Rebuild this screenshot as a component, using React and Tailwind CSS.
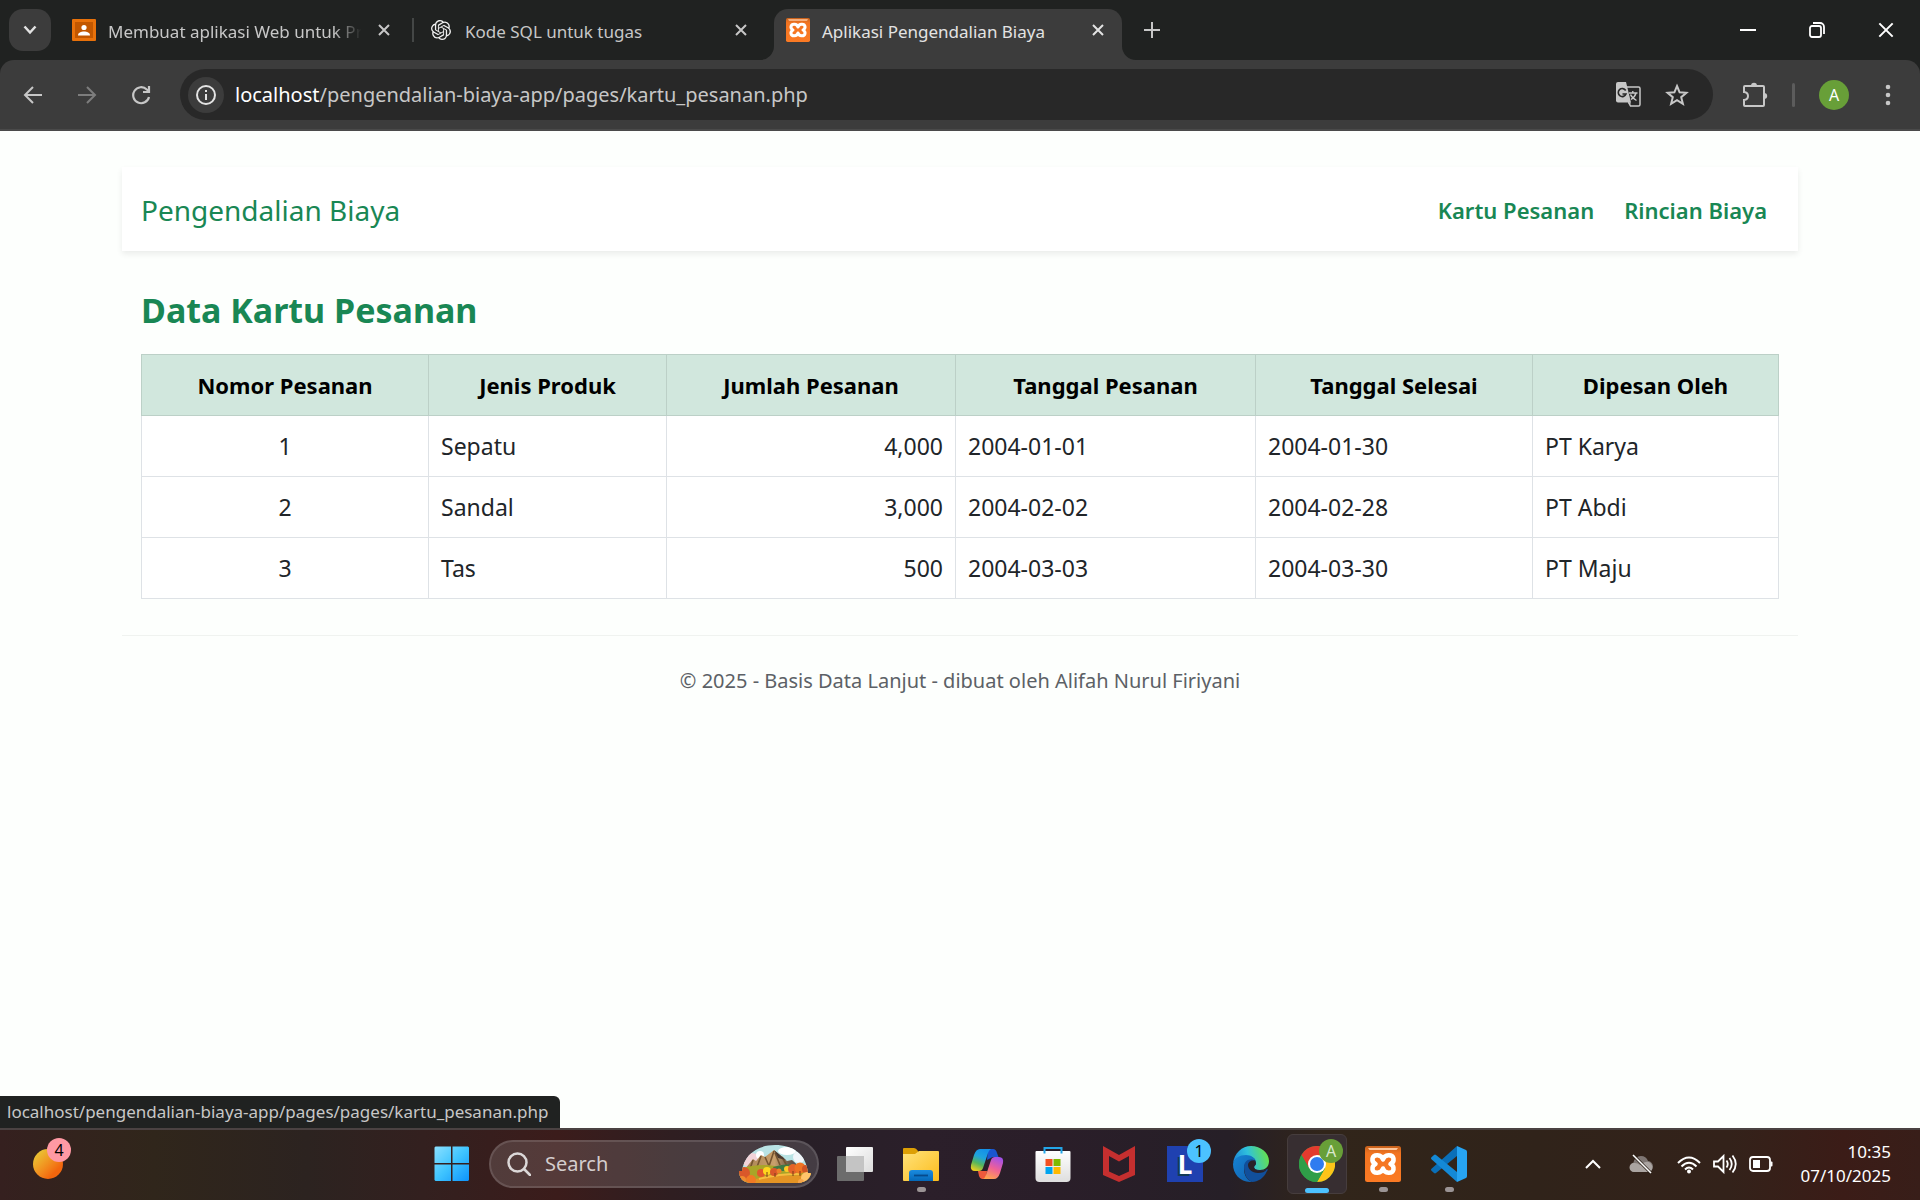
import React, { useId } from "react";
import { SiOpenai } from "react-icons/si";

const rows = [
  ["1", "Sepatu", "4,000", "2004-01-01", "2004-01-30", "PT Karya"],
  ["2", "Sandal", "3,000", "2004-02-02", "2004-02-28", "PT Abdi"],
  ["3", "Tas", "500", "2004-03-03", "2004-03-30", "PT Maju"],
];
const headers = ["Nomor Pesanan", "Jenis Produk", "Jumlah Pesanan", "Tanggal Pesanan", "Tanggal Selesai", "Dipesan Oleh"];
const cellAlign = ["text-center", "text-left", "text-right", "text-left", "text-left", "text-left"];

function Cross({ className = "size-3", w = 2 }) {
  return (
    <svg viewBox="0 0 12 12" className={className} fill="none" stroke="currentColor" strokeWidth={w}>
      <path d="M1 1l10 10M11 1L1 11" />
    </svg>
  );
}

function Xampp({ className }) {
  const id = useId();
  return (
    <svg viewBox="0 0 36 36" className={className}>
      <defs>
        <linearGradient id={id} x1="0" y1="0" x2="0" y2="1">
          <stop offset="0" stopColor="#c4601c" />
          <stop offset=".2" stopColor="#f27421" />
          <stop offset="1" stopColor="#fb7a24" />
        </linearGradient>
      </defs>
      <rect width="36" height="36" rx="2.500" fill={`url(#${id})`} />
      <path d="M3 2h30l-1.500 2h-27z" fill="#ffc79c" />
      <path
        d="M18 13.500C16.500 8 8.500 8 7.500 12.500 7 15.500 8.500 17 10.500 18 8.500 19 7 20.500 7.500 23.500 8.500 28 16.500 28 18 22.500 19.500 28 27.500 28 28.500 23.500 29 20.500 27.500 19 25.500 18 27.500 17 29 15.500 28.500 12.500 27.500 8 19.500 8 18 13.500z"
        fill="none"
        stroke="#fff"
        strokeWidth="4.500"
        strokeLinejoin="round"
      />
    </svg>
  );
}

function Classroom() {
  return (
    <svg viewBox="0 0 24 24" className="size-6 shrink-0">
      <rect y="1" width="24" height="22" rx="1" fill="#e8710a" />
      <rect x="3" y="4" width="18" height="16" fill="#c25700" />
      <circle cx="12" cy="9.500" r="2.600" fill="#fff" />
      <path d="M6 17.500c0-3 3-4 6-4s6 1 6 4z" fill="#fff" />
    </svg>
  );
}

function TabStrip() {
  return (
    <header className="flex h-[60px] items-center bg-[#202221] text-[#c7c7c7]">
      <button aria-label="Search tabs" className="ml-[9px] flex size-[42px] shrink-0 items-center justify-center rounded-[14px] bg-[#3c3c3c] text-[#e3e3e3]">
        <svg viewBox="0 0 14 10" className="h-[10px] w-[14px]" fill="none" stroke="currentColor" strokeWidth="2.500">
          <path d="M1.500 1.500L7 7.500l5.500-6" />
        </svg>
      </button>
      <div className="flex w-[723px] shrink-0 items-center">
        <div className="flex w-[361px] items-center pl-[21px]">
          <Classroom />
          <span className="ml-3 w-[256px] pt-[3px] text-[17px] whitespace-nowrap [mask-image:linear-gradient(to_right,#000_88%,transparent_99%)]">
            Membuat aplikasi Web untuk Pr
          </span>
          <button aria-label="Close tab" className="ml-[14px]"><Cross /></button>
        </div>
        <div className="h-6 w-[2px] bg-[#444746]" />
        <div className="flex flex-1 items-center pl-[17px]">
          <SiOpenai className="size-5 shrink-0 text-[#f1f1f1]" />
          <span className="ml-[14px] flex-1 pt-[3px] text-[17px]">Kode SQL untuk tugas</span>
          <button aria-label="Close tab" className="mr-[27px]"><Cross /></button>
        </div>
      </div>
      <div className="relative flex h-[51px] w-[348px] shrink-0 items-center self-end rounded-t-[14px] bg-[#3c3c3c] pb-[9px] pl-3 text-[#e3e3e3]">
        <svg viewBox="0 0 14 14" className="absolute bottom-0 -left-[14px] size-[14px] fill-[#3c3c3c]"><path d="M14 0v14H0A14 14 0 0014 0z" /></svg>
        <svg viewBox="0 0 14 14" className="absolute -right-[14px] bottom-0 size-[14px] fill-[#3c3c3c]"><path d="M0 0v14h14A14 14 0 010 0z" /></svg>
        <Xampp className="size-6 shrink-0" />
        <span className="ml-3 flex-1 pt-[3px] text-[17px]">Aplikasi Pengendalian Biaya</span>
        <button aria-label="Close tab" className="mr-[18px]"><Cross /></button>
      </div>
      <button aria-label="New tab" className="ml-[22px]">
        <svg viewBox="0 0 16 16" className="size-4" stroke="currentColor" strokeWidth="2"><path d="M8 0v16M0 8h16" /></svg>
      </button>
      <div className="ml-auto flex text-white">
        <button aria-label="Minimize" className="flex h-[60px] w-[69px] items-center justify-center">
          <svg viewBox="0 0 16 16" className="size-4" stroke="currentColor" strokeWidth="2"><path d="M0 8h16" /></svg>
        </button>
        <button aria-label="Restore" className="flex h-[60px] w-[69px] items-center justify-center">
          <svg viewBox="0 0 16 16" className="size-4" fill="none" stroke="currentColor" strokeWidth="1.800">
            <rect x="1" y="4" width="11" height="11" rx="2" />
            <path d="M4 1h7a4 4 0 014 4v7" />
          </svg>
        </button>
        <button aria-label="Close" className="flex h-[60px] w-[69px] items-center justify-center"><Cross className="size-4" w={1.5} /></button>
      </div>
    </header>
  );
}

function Toolbar() {
  return (
    <div className="bg-[#202221]">
      <div className="flex h-[71px] items-center rounded-t-[14px] border-b-2 border-[#4a4a4a] bg-[#3c3c3c] text-[#c7c7c7]">
        <button aria-label="Back" className="ml-[23px]">
          <svg viewBox="0 0 20 20" className="size-5" fill="none" stroke="currentColor" strokeWidth="2"><path d="M19 10H2M10 2l-8 8 8 8" /></svg>
        </button>
        <button aria-label="Forward" className="ml-[34px] text-[#7d7d7d]">
          <svg viewBox="0 0 20 20" className="size-5" fill="none" stroke="currentColor" strokeWidth="2"><path d="M1 10h17M10 2l8 8-8 8" /></svg>
        </button>
        <button aria-label="Reload" className="ml-[34px]">
          <svg viewBox="0 0 20 20" className="size-5" fill="none" stroke="currentColor" strokeWidth="2.200"><path d="M18 12a8 8 0 11-2.200-7.500L18 6.500M18 1v6h-6" /></svg>
        </button>
        <div className="ml-[29px] flex h-[51px] flex-1 items-center rounded-full bg-[#282828] pl-2">
          <button aria-label="Site information" className="flex size-9 items-center justify-center rounded-full bg-[#3c3c3c] text-[#e3e3e3]">
            <svg viewBox="0 0 20 20" className="size-5" fill="none" stroke="currentColor" strokeWidth="2"><circle cx="10" cy="10" r="9" /><path d="M10 9v6M10 5v2" /></svg>
          </button>
          <a href="#address" className="ml-[11px] flex-1 text-[20px]">
            <span className="text-white">localhost</span>/pengendalian-biaya-app/pages/kartu_pesanan.php
          </a>
          <button aria-label="Translate this page">
            <svg viewBox="0 0 25 25" className="size-[25px]">
              <path d="M11 5h11.500q1.500 0 1.500 1.500v16q0 1.500-1.500 1.500H14.500l-2-4" fill="none" stroke="currentColor" strokeWidth="1.500" />
              <path d="M2 0h8l5 20.500H2q-2 0-2-2V2q0-2 2-2z" fill="currentColor" />
              <path d="M9.700 8.500A4 4 0 1010 12H6.500" fill="none" stroke="#282828" strokeWidth="1.600" />
              <path d="M13 11h8.500M16.800 9v2M20 11c-.7 3-2.700 5-5 6.500M14.500 12.500c1 2.500 3.500 4.500 6 6" fill="none" stroke="currentColor" strokeWidth="1.400" />
              <path d="M12 20.500h3l-1.500 3z" fill="currentColor" />
            </svg>
          </button>
          <button aria-label="Bookmark this tab" className="mr-6 ml-6">
            <svg viewBox="0 0 24 24" className="size-6" fill="none" stroke="currentColor" strokeWidth="2">
              <path d="M12 3l2.600 6.300 6.800.5-5.200 4.400 1.700 6.600L12 17.200l-5.900 3.600 1.700-6.600-5.200-4.400 6.800-.5z" />
            </svg>
          </button>
        </div>
        <button aria-label="Extensions" className="ml-[29px]">
          <svg viewBox="0 0 26 26" className="size-[26px]" fill="none" stroke="currentColor" strokeWidth="2">
            <path d="M3 4h18q1 0 1 1v18q0 1-1 1H3q-1 0-1-1v-5q4-.5 4-4t-4-4V5q0-1 1-1z" />
            <path d="M9 4a3 3.200 0 016 0zM22 11a3.200 3 0 010 6z" fill="currentColor" stroke="none" />
          </svg>
        </button>
        <div className="ml-6 h-6 w-[3px] rounded bg-[#5c5c5c]" />
        <button aria-label="Profile" className="ml-6 size-[30px] rounded-full bg-[#689f38] text-[16px] text-white">A</button>
        <button aria-label="Menu" className="mr-[22px] ml-[29px]">
          <svg viewBox="0 0 20 22" className="h-[22px] w-5" fill="currentColor"><circle cx="10" cy="3" r="2.300" /><circle cx="10" cy="11" r="2.300" /><circle cx="10" cy="19" r="2.300" /></svg>
        </button>
      </div>
    </div>
  );
}

function Page() {
  return (
    <div className="relative flex-1 bg-[#fdfffd] px-[122px] pt-[36px]">
      <nav className="flex h-[84px] items-center justify-between bg-white px-[19px] pt-[2px] shadow-[0_3px_6px_rgba(0,0,0,0.075)]">
        <a href="#home" className="text-[28px] text-[#198754]">Pengendalian Biaya</a>
        <div className="mr-3 flex gap-[30px] text-[22px] font-semibold text-[#198754]">
          <a href="#kartu">Kartu Pesanan</a>
          <a href="#rincian">Rincian Biaya</a>
        </div>
      </nav>
      <main className="px-[19px]">
        <h1 className="mt-[38px] text-[34px] leading-[43px] font-bold text-[#198754]">Data Kartu Pesanan</h1>
        <table className="mt-[22px] w-full table-fixed border-collapse bg-white text-[23px] leading-9 text-[#212529]">
          <colgroup>
            <col className="w-[287px]" />
            <col className="w-[238px]" />
            <col className="w-[289px]" />
            <col className="w-[300px]" />
            <col className="w-[277px]" />
            <col className="w-[246px]" />
          </colgroup>
          <thead>
            <tr className="bg-[#d1e7dd] text-[22px] text-black">
              {headers.map((h) => (
                <th key={h} scope="col" className="border border-[#bcd0c7] p-3 font-bold">{h}</th>
              ))}
            </tr>
          </thead>
          <tbody>
            {rows.map((r) => (
              <tr key={r[0]}>
                {r.map((c, i) => (
                  <td key={i} className={`border border-[#dee2e6] p-3 ${cellAlign[i]}`}>{c}</td>
                ))}
              </tr>
            ))}
          </tbody>
        </table>
      </main>
      <footer className="mt-9 border-t border-[#f0f3f0] pt-[30px] text-center text-[20px] leading-[30px] text-[#5c6166]">
        © 2025 - Basis Data Lanjut - dibuat oleh Alifah Nurul Firiyani
      </footer>
      <div className="absolute bottom-0 left-0 flex h-8 items-center rounded-tr-md bg-[#202221] pr-3 pl-[7px] text-[17px] text-[#c7c7c7]">
        localhost/pengendalian-biaya-app/pages/pages/kartu_pesanan.php
      </div>
    </div>
  );
}

function Start() {
  return (
    <svg viewBox="0 0 36 36" className="size-9">
      <defs>
        <linearGradient id="win" x1="0" y1="0" x2="1" y2="1"><stop stopColor="#8be0ff" /><stop offset=".5" stopColor="#3fc4ff" /><stop offset="1" stopColor="#0d93fb" /></linearGradient>
      </defs>
      <path d="M1.500.5H17V17H.5V1.500zM18.500.5H34l1 1V17H18.500zM.5 18.500H17V35H1.500l-1-1zM18.500 18.500H35V34l-1 1H18.500z" fill="url(#win)" />
    </svg>
  );
}

function SearchArt() {
  return (
    <svg viewBox="0 0 72 38" className="h-[38px] w-[72px]">
      <defs>
        <clipPath id="dome"><path d="M0 26h3C5 10 18 0 36 0s31 9 33 28h3c-1 6-6 9-12 10H12C4 38 0 33 0 26z" /></clipPath>
        <linearGradient id="rock"><stop stopColor="#a98254" /><stop offset=".5" stopColor="#c9a06c" /><stop offset=".75" stopColor="#6d5a4a" /><stop offset="1" stopColor="#3c4a5c" /></linearGradient>
      </defs>
      <g clipPath="url(#dome)">
        <rect width="72" height="38" fill="#b9e3e4" />
        <ellipse cx="48" cy="6" rx="9" ry="4" fill="#fff" /><circle cx="60" cy="12" r="6" fill="#f1f6fa" /><ellipse cx="12" cy="15" rx="10" ry="7" fill="#f2d3d8" /><circle cx="21" cy="10" r="4" fill="#fff" />
        <path d="M6 24l8-10 3 2 5-6 4 2 9-7 6 5 7 6 5-1 12 11v4H6z" fill="url(#rock)" />
        <path d="M14 15l-3 9M22 11l-4 11M26 12l4 9M35 6l-5 15M36 8l5 12M43 12l5 9" stroke="#75542f" strokeWidth="1.600" />
        <path d="M35 5l6 5 6 5-8-2z" fill="#4a3a30" />
        <path d="M0 24q20-6 36-3t36 0v17H0z" fill="#a9a528" />
        <path d="M34 22q12-4 28-2l-8 6H36z" fill="#3f7a45" />
        <path d="M10 38q15-10 34-8t28-4v12z" fill="#e49424" />
        <path d="M20 34q18-5 40-5" stroke="#f6bd3f" strokeWidth="2" fill="none" />
        <circle cx="5" cy="28" r="6" fill="#d9582a" /><circle cx="12" cy="35" r="5" fill="#f07a25" /><circle cx="3" cy="35" r="4" fill="#ef8b30" />
        <circle cx="22" cy="28" r="4" fill="#e2572b" /><circle cx="28" cy="26" r="4" fill="#ffd51e" /><circle cx="35" cy="27" r="4" fill="#d9582a" /><circle cx="40" cy="26" r="2.500" fill="#ee7f28" />
        <circle cx="48" cy="24" r="3" fill="#ffc926" /><circle cx="54" cy="24" r="5" fill="#e4632a" /><circle cx="61" cy="23" r="5.500" fill="#ef7423" /><circle cx="67" cy="24" r="4" fill="#cf5425" />
        <path d="M28 27v5M54 26v5M61 26v5M36 28v4" stroke="#7a3c16" />
        <circle cx="68" cy="33" r="6" fill="#ffc56b" /><circle cx="62" cy="37" r="3" fill="#f6a54a" />
      </g>
    </svg>
  );
}

function TaskView() {
  return (
    <svg viewBox="0 0 36 36" className="size-9">
      <defs><linearGradient id="tv" x1="0" y1="0" x2="1" y2="1"><stop stopColor="#fff" /><stop offset="1" stopColor="#dcdcdc" /></linearGradient></defs>
      <rect x="9" y="1" width="27" height="25" rx="1" fill="url(#tv)" />
      <rect y="10" width="27" height="25" rx="1" fill="#6c6c6c" />
      <path d="M9 10h18v16H9z" fill="#c4c4c4" />
    </svg>
  );
}

function Folder() {
  return (
    <svg viewBox="0 0 36 36" className="size-9">
      <defs>
        <linearGradient id="fo" x1="0" y1="0" x2="1" y2="1"><stop stopColor="#ffe27a" /><stop offset="1" stopColor="#fcbc1c" /></linearGradient>
        <linearGradient id="fb" x1="0" y1="0" x2="0" y2="1"><stop stopColor="#1a8be0" /><stop offset="1" stopColor="#0568b8" /></linearGradient>
      </defs>
      <path d="M0 3q0-1 1-1h10q2 0 4 3v4H0z" fill="#dd9f05" />
      <path d="M0 8h12l4-3h19q1 0 1 1v28q0 1-1 1H1q-1 0-1-1z" fill="url(#fo)" />
      <path d="M6 35V27q0-3 3-3h18q3 0 3 3v8z" fill="url(#fb)" />
      <path d="M11 29.500h14" stroke="#064a8c" strokeWidth="1.800" />
    </svg>
  );
}

function Copilot() {
  return (
    <svg viewBox="0 0 36 36" className="size-9">
      <defs>
        <linearGradient id="c1" x1=".6" y1="0" x2=".2" y2="1"><stop stopColor="#1591e8" /><stop offset=".35" stopColor="#1fa3dd" /><stop offset=".65" stopColor="#55b55d" /><stop offset="1" stopColor="#f3cf1b" /></linearGradient>
        <linearGradient id="c2" x1=".7" y1="0" x2=".3" y2="1"><stop stopColor="#a251ea" /><stop offset=".5" stopColor="#ee6098" /><stop offset="1" stopColor="#ffa34e" /></linearGradient>
      </defs>
      <path d="M19 3h5q3 0 4 4l1.500 4h-6L18 14z" fill="#1a56d0" />
      <path d="M9 25h9l-1 8h-4q-2 0-3-3z" fill="#ef5a3c" />
      <path d="M11 3h11q-2 1-3 4l-5 15q-1 3-4 3H6q-5 0-4-6l3-10q2-6 6-6z" fill="url(#c1)" />
      <path d="M25 33H14q2-1 3-4l5-15q1-3 4-3h4q5 0 4 6l-3 10q-2 6-6 6z" fill="url(#c2)" />
    </svg>
  );
}

function Store() {
  return (
    <svg viewBox="0 0 36 36" className="size-9">
      <defs><linearGradient id="st" x1="0" y1="0" x2="0" y2="1"><stop stopColor="#fff" /><stop offset="1" stopColor="#dedede" /></linearGradient></defs>
      <path d="M.5 6q0-1 1-1h33q1 0 1 1v26q0 4-4 4h-27q-4 0-4-4z" fill="url(#st)" />
      <path d="M9.500 7.500V2h17v5.500" fill="none" stroke="#23a6e8" strokeWidth="2" />
      <path d="M10.500 13h7v7h-7z" fill="#f25022" /><path d="M18.500 13h7v7h-7z" fill="#7fba00" /><path d="M10.500 21h7v7h-7z" fill="#00a4ef" /><path d="M18.500 21h7v7h-7z" fill="#ffb900" />
    </svg>
  );
}

function McAfee() {
  return (
    <svg viewBox="0 0 36 36" className="size-9">
      <path fillRule="evenodd" d="M2 0l16 9 16-9v29l-16 7-16-7zM8 10v15.500l10 4.500 10-4.500V10l-10 5.500z" fill="#c52f2f" />
    </svg>
  );
}

function Edge() {
  return (
    <svg viewBox="0 0 36 36" className="size-9">
      <defs>
        <linearGradient id="e1" x1="0" y1=".6" x2="1" y2=".4"><stop stopColor="#1c86d8" /><stop offset=".45" stopColor="#2fc1dd" /><stop offset="1" stopColor="#68e247" /></linearGradient>
        <linearGradient id="e2" x1="0" y1="0" x2="1" y2="1"><stop stopColor="#1583d4" /><stop offset="1" stopColor="#1260ad" /></linearGradient>
      </defs>
      <path d="M0 18C1 7 9 0 18 0c10 0 18 7 18 15 0 6-4 9-9 9-4 0-6-1-6-3 0-1 2-2 2-4 0-4-4-7-9-7C7 10 1 13 0 18z" fill="url(#e1)" />
      <path d="M0 18c1-6 7-9 13-9 5 0 9 3 10 6-5-3-12 0-12 8 0 6 3 11 8 13C8 36.500 0 29 0 18z" fill="url(#e2)" />
      <path d="M11 21c0-5 4-9 9-7 2 1 3 2 3 3 0 2-2 3-2 4 0 4 9 5 13 2 1 0 1 1 0 2-3 7-9 11-15 11-5-2-8-8-8-15z" fill="#114f9b" />
      <path d="M15 19c0-3 3-5 5.500-4.500 2 1 2.500 2 2.500 3-.5 2-2 2.500-2 3.500 0 4 9 5 13 2-2 3-5 4-9 4-6 0-10-4-10-8z" fill="#2a2129" />
    </svg>
  );
}

function ChromeLogo() {
  return (
    <svg viewBox="0 0 36 36" className="size-9">
      <circle cx="18" cy="18" r="18" fill="#2f9e48" />
      <path d="M18 18L2.400 9A18 18 0 0133.600 9z" fill="#e33b2e" />
      <path d="M18 9h15.600A18 18 0 0118 36l7.800-13.500z" fill="#fcc419" />
      <path d="M2.400 9l7.800 13.500L18 9z" fill="#e33b2e" />
      <path d="M2.400 9A18 18 0 0018 36l7.800-13.500H10.200z" fill="#2f9e48" />
      <circle cx="18" cy="18" r="9" fill="#fff" /><circle cx="18" cy="18" r="7" fill="#2f7cf0" />
    </svg>
  );
}

function VsCode() {
  return (
    <svg viewBox="0 0 36 36" className="size-9">
      <path d="M26 0v10L5 27q-1 .8-2 0l-2.500-2.300q-1-1 0-2z" fill="#0a6fb8" />
      <path d="M26 36V26L5 9Q4 8.200 3 9L.5 11.300q-1 1 0 2z" fill="#1489d6" />
      <path d="M26 0l9 4q1 .5 1 2v24q0 1.500-1 2l-9 4z" fill="#27a4f2" />
    </svg>
  );
}

function Badge({ children, tone }) {
  return <span className={`absolute -top-[7px] -right-2 flex size-6 items-center justify-center rounded-full text-[16px] ${tone}`}>{children}</span>;
}

function TaskButton({ label, children, running, active }) {
  return (
    <button
      aria-label={label}
      className={`relative mx-[3px] flex size-[60px] items-center justify-center rounded-md ${active ? "border border-[#463d3d] bg-[#372e31]" : ""}`}
    >
      <span className="relative">{children}</span>
      {running && <span className="absolute bottom-[2px] h-[5px] w-[9px] rounded-full bg-[#9b9495]" />}
      {active && <span className="absolute bottom-0 h-[5px] w-6 rounded-full bg-[#4cc2ff]" />}
    </button>
  );
}

function Taskbar() {
  return (
    <footer className="flex h-[72px] items-center border-t-2 border-[#4b4242] bg-[linear-gradient(90deg,#35201f_0%,#30261b_8%,#2c2320_16%,#33201f_22%,#3b1c1b_29%,#2f1e21_35%,#281f27_42%,#2b1f2a_48%,#2a1e29_55%,#261f27_64%,#31251a_69%,#30231a_80%,#33221a_90%,#3b1c17_96%,#381e19_100%)] pb-[2px] text-white">
      <button aria-label="Widgets" className="relative ml-[33px] h-[30px] w-[30px] rounded-full bg-linear-to-br from-[#e9c032] from-15% to-[#f2660d] to-75%">
        <span className="absolute -top-[11px] left-[14px] flex size-6 items-center justify-center rounded-full bg-[#ff99a4] text-[16px] text-black">4</span>
      </button>
      <button aria-label="Start" className="ml-[371px]"><Start /></button>
      <label className="ml-[19px] flex h-12 w-[330px] shrink-0 items-center rounded-full border-2 border-[#ffffff20] bg-[#ffffff22] pl-4">
        <svg viewBox="0 0 24 24" className="size-6" fill="none" stroke="#dcd8d8" strokeWidth="2.500"><circle cx="10.500" cy="10.500" r="9" /><path d="M17 17l6 6" strokeLinecap="round" /></svg>
        <input type="text" placeholder="Search" aria-label="Search" className="ml-[14px] w-[180px] bg-transparent text-[20px] outline-none placeholder:text-[#d4cdcd]" />
        <span className="ml-auto pr-[6px]"><SearchArt /></span>
      </label>
      <div className="ml-[3px] flex">
        <TaskButton label="Task view"><TaskView /></TaskButton>
        <TaskButton label="File Explorer" running><Folder /></TaskButton>
        <TaskButton label="Copilot"><Copilot /></TaskButton>
        <TaskButton label="Microsoft Store"><Store /></TaskButton>
        <TaskButton label="McAfee"><McAfee /></TaskButton>
        <TaskButton label="L">
          <span className="flex size-9 items-center justify-center bg-[#1f41b0] text-[26px] leading-none font-bold [text-shadow:-2px_2px_0_#123b56]">L</span>
          <Badge tone="bg-[#4cc2ff] text-black">1</Badge>
        </TaskButton>
        <TaskButton label="Edge"><Edge /></TaskButton>
        <TaskButton label="Chrome" active><ChromeLogo /><Badge tone="bg-[#689f38] text-[#d9e8cc]">A</Badge></TaskButton>
        <TaskButton label="XAMPP" running><Xampp className="size-9" /></TaskButton>
        <TaskButton label="Visual Studio Code" running><VsCode /></TaskButton>
      </div>
      <div className="mr-[29px] ml-auto flex items-center">
        <button aria-label="Show hidden icons" className="mr-7">
          <svg viewBox="0 0 16 10" className="h-[10px] w-4" fill="none" stroke="currentColor" strokeWidth="2"><path d="M1 9l7-7 7 7" /></svg>
        </button>
        <svg viewBox="0 0 24 20" className="mr-6 h-5 w-6">
          <path d="M5 18a5 5 0 01-.5-9.500Q6 2 12 2q5 0 7 5a5.500 5.500 0 01-1 11z" fill="#7e7673" />
          <path d="M5 18a4.500 4.500 0 010-9q3-.5 6 2l4-2.500q6-2.500 8 3 1.500 6-4 6.500z" fill="#aaa4a1" />
          <path d="M4 1l18 18" stroke="#2c2118" strokeWidth="3" /><path d="M4 1l18 18" stroke="#fff" strokeWidth="1.600" />
        </svg>
        <button aria-label="Network, volume and battery" className="mr-7 flex gap-3">
          <svg viewBox="0 0 24 20" className="h-5 w-6" fill="none" stroke="currentColor" strokeWidth="2">
            <path d="M1 9q11-11 22 0M4.500 12.500q7.500-7.500 15 0M8 15.500q4-4 8 0" /><circle cx="12" cy="17.500" r="2" fill="currentColor" stroke="none" />
          </svg>
          <svg viewBox="0 0 24 20" className="h-5 w-6" fill="none" stroke="currentColor" strokeWidth="1.800">
            <path d="M1 7.500h4L10.500 2v16L5 12.500H1zM13.500 6.500q2.500 3.500 0 7M16.500 4q4.500 6 0 12M19.500 1.500q6.500 8.500 0 17" />
          </svg>
          <svg viewBox="0 0 24 20" className="h-5 w-6" fill="none" stroke="currentColor" strokeWidth="1.800">
            <rect x="1" y="3" width="20" height="14" rx="3" /><path d="M4 6h7v8H4z" fill="currentColor" stroke="none" /><path d="M21.500 7.500h1q1 0 1 1v3q0 1-1 1h-1z" fill="currentColor" stroke="none" />
          </svg>
        </button>
        <time className="text-right text-[17px] leading-6">10:35<br />07/10/2025</time>
      </div>
    </footer>
  );
}

export default function App() {
  return (
    <div className="flex min-h-screen flex-col font-['Noto_Sans',sans-serif]">
      <TabStrip />
      <Toolbar />
      <Page />
      <Taskbar />
    </div>
  );
}
